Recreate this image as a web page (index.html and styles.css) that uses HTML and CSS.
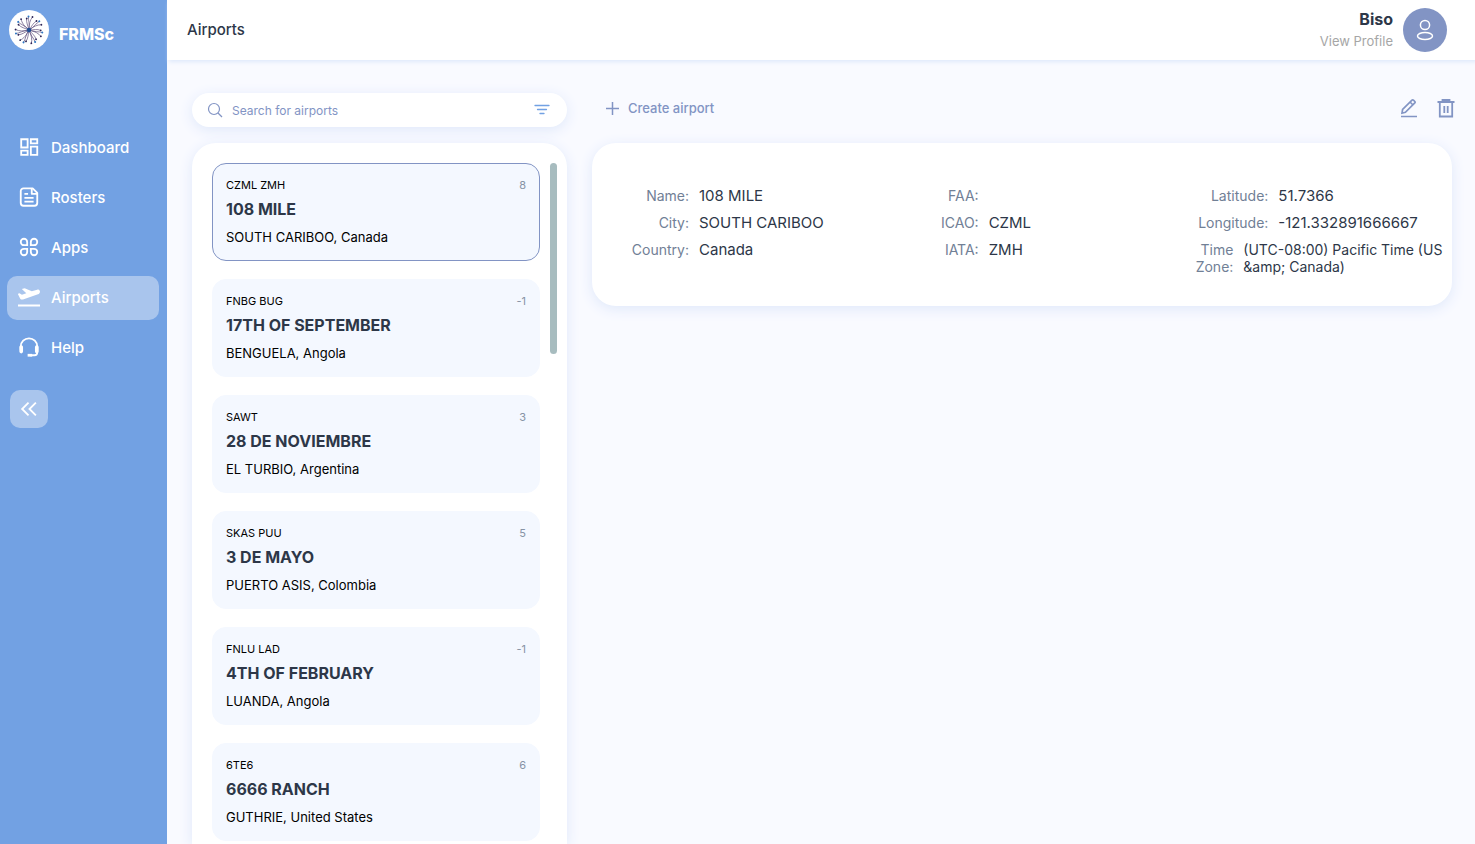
FILE: index.html
```html
<!DOCTYPE html>
<html lang="en">
  <head>
    <meta charset="UTF-8" />
    <meta name="viewport" content="width=device-width, initial-scale=1" />
    <title>FRMSc - Airports</title>
    <link rel="stylesheet" href="styles.css">
  </head>
  <body>
    <div class="app">
      <aside class="sidebar">
        <a class="brand" href="#">
          <svg class="logo" viewBox="0 0 40 40" aria-hidden="true">
            <defs>
              <g id="strands">
                <path d="M20 20C20 14 21 10 23.500 7M20 20C21 14 19 10 19.500 6.500M20 20C23 16 24 13 27.500 11" fill="none" stroke="#6a5c86" stroke-width=".7" />
                <circle cx="23.500" cy="7" r=".9" fill="#2b2354" />
                <circle cx="19.500" cy="6.500" r="1" fill="#2f78c4" />
                <circle cx="27.500" cy="11" r=".9" fill="#2b2354" />
              </g>
            </defs>
            <circle cx="20" cy="20" r="20" fill="#fff" />
            <use href="#strands" />
            <use href="#strands" transform="rotate(52 20 20)" />
            <use href="#strands" transform="rotate(103 20 20)" />
            <use href="#strands" transform="rotate(155 20 20)" />
            <use href="#strands" transform="rotate(206 20 20)" />
            <use href="#strands" transform="rotate(257 20 20)" />
            <use href="#strands" transform="rotate(309 20 20)" />
            <circle cx="20" cy="20" r="2.200" fill="#1f4f94" />
          </svg>
          <span class="brand-name">FRMSc</span>
        </a>
        <nav class="menu">
          <a class="menu-item" href="#">
            <svg class="icon" viewBox="0 0 24 24" fill="none" stroke="currentColor" stroke-width="2">
              <path d="M3.500 3.500h7v9h-7zM14 3.500h7v4.500h-7zM3.500 16h7v4.500h-7zM14 11.500h7v9h-7z" />
            </svg>
            Dashboard
          </a>
          <a class="menu-item" href="#">
            <svg class="icon" viewBox="0 0 24 24" fill="none" stroke="currentColor" stroke-width="2" stroke-linejoin="round">
              <path d="M6 2.500h10l5 5v11a3 3 0 0 1-3 3H6a3 3 0 0 1-3-3v-13a3 3 0 0 1 3-3z" />
              <path d="M15 3v5.500h6M7 8.500h4M7 13h10M7 17h10" />
            </svg>
            Rosters
          </a>
          <a class="menu-item" href="#">
            <svg class="icon" viewBox="0 0 24 24" fill="none" stroke="currentColor" stroke-width="2">
              <path d="M10 10H6.500A3.500 3.500 0 1 1 10 6.500zM14 10V6.500A3.500 3.500 0 1 1 17.500 10zM10 14v3.500A3.500 3.500 0 1 1 6.500 14zM14 14h3.500A3.500 3.500 0 1 1 14 17.500z" />
            </svg>
            Apps
          </a>
          <a class="menu-item active" href="#">
            <svg class="icon" viewBox="1 1 22 22" fill="currentColor">
              <path d="M1 19.500h22v2H1z" />
              <path d="M22.900 6.200c-.3-1.200-1.500-1.800-2.700-1.500L14.800 6.200 7.700 3.200 4.800 4.100l4.500 4.200-4.400 1.500L2.500 8.300.8 8.800l2.300 4.600c.6 1.100 1.700 1.400 2.900 1.100l15-5.200c1.400-.5 2.200-1.800 1.900-3.100z" />
            </svg>
            Airports
          </a>
          <a class="menu-item" href="#">
            <svg class="icon" viewBox="0 0 24 24" fill="none" stroke="currentColor" stroke-width="2">
              <path d="M3 15v-3.500a9 9 0 0 1 18 0V18a3 3 0 0 1-3 3h-5" />
              <path d="M3.500 12v5M20.500 12v5" stroke-width="4" stroke-linecap="round" />
              <path d="M10.500 21h5" stroke-width="3" />
            </svg>
            Help
          </a>
        </nav>
        <button class="collapse" type="button" aria-label="Collapse menu">
          <svg class="icon" viewBox="0 0 24 24" fill="none" stroke="currentColor" stroke-width="2">
            <path d="M11.500 5l-7 7 7 7M19.500 5l-7 7 7 7" />
          </svg>
        </button>
      </aside>

      <div class="page">
        <header class="topbar">
          <h1 class="page-title">Airports</h1>
          <a class="profile" href="#">
            <span class="profile-text">
              <strong class="profile-name">Biso</strong>
              <span class="profile-link">View Profile</span>
            </span>
            <span class="avatar">
              <svg class="icon-user" viewBox="0 0 24 24" fill="none" stroke="currentColor" stroke-width="1.500">
                <circle cx="12" cy="7" r="4.600" />
                <ellipse cx="12" cy="18" rx="7.500" ry="3.500" />
              </svg>
            </span>
          </a>
        </header>

        <main class="content">
          <section class="browser">
            <form class="search">
              <svg class="icon-search" viewBox="0 0 16 16" fill="none" stroke="currentColor" stroke-width="1.200">
                <circle cx="7" cy="7" r="5.500" />
                <path d="M11 11l4 4" />
              </svg>
              <input class="search-input" type="text" placeholder="Search for airports" aria-label="Search for airports">
              <button class="filter" type="button" aria-label="Filter">
                <svg class="icon-filter" viewBox="0 0 16 16" fill="none" stroke="currentColor" stroke-width="1.300" stroke-linecap="round">
                  <path d="M1 3.500h14M3.500 7.500h9M6 11.500h4" />
                </svg>
              </button>
            </form>

            <div class="list-panel">
              <ul class="airports">
                <li class="airport selected">
                  <div class="airport-top"><span>CZML ZMH</span><span class="offset">8</span></div>
                  <h2 class="airport-name">108 MILE</h2>
                  <p class="airport-city">SOUTH CARIBOO, Canada</p>
                </li>
                <li class="airport">
                  <div class="airport-top"><span>FNBG BUG</span><span class="offset">-1</span></div>
                  <h2 class="airport-name">17TH OF SEPTEMBER</h2>
                  <p class="airport-city">BENGUELA, Angola</p>
                </li>
                <li class="airport">
                  <div class="airport-top"><span>SAWT</span><span class="offset">3</span></div>
                  <h2 class="airport-name">28 DE NOVIEMBRE</h2>
                  <p class="airport-city">EL TURBIO, Argentina</p>
                </li>
                <li class="airport">
                  <div class="airport-top"><span>SKAS PUU</span><span class="offset">5</span></div>
                  <h2 class="airport-name">3 DE MAYO</h2>
                  <p class="airport-city">PUERTO ASIS, Colombia</p>
                </li>
                <li class="airport">
                  <div class="airport-top"><span>FNLU LAD</span><span class="offset">-1</span></div>
                  <h2 class="airport-name">4TH OF FEBRUARY</h2>
                  <p class="airport-city">LUANDA, Angola</p>
                </li>
                <li class="airport">
                  <div class="airport-top"><span>6TE6</span><span class="offset">6</span></div>
                  <h2 class="airport-name">6666 RANCH</h2>
                  <p class="airport-city">GUTHRIE, United States</p>
                </li>
              </ul>
              <div class="scroll-thumb"></div>
            </div>
          </section>

          <section class="details">
            <div class="toolbar">
              <button class="create" type="button">
                <svg class="icon-plus" viewBox="0 0 16 16" fill="none" stroke="currentColor" stroke-width="1.500">
                  <path d="M8.500 2v13M2 8.500h13" />
                </svg>
                Create airport
              </button>
              <div class="tools">
                <button class="tool" type="button" aria-label="Edit airport">
                  <svg class="icon-tool" viewBox="0 0 20 20" fill="none" stroke="currentColor" stroke-width="1.700">
                    <path d="M3 15.200l.6-3.700 9.400-9.400q.7-.7 1.400 0l1.400 1.400q.7.700 0 1.400l-9.400 9.400zM11 4l3 3M2 18.500h16" />
                  </svg>
                </button>
                <button class="tool" type="button" aria-label="Delete airport">
                  <svg class="icon-tool" viewBox="0 0 20 20" fill="none" stroke="currentColor" stroke-width="1.800">
                    <path d="M1.500 4h17M6.500 3.500V2h7v1.500M3.800 4v14.500h12.400V4M8.300 8v7M11.700 8v7" />
                  </svg>
                </button>
              </div>
            </div>

            <div class="detail-card">
              <dl class="detail-col">
                <div class="field"><dt>Name:</dt><dd>108 MILE</dd></div>
                <div class="field"><dt>City:</dt><dd>SOUTH CARIBOO</dd></div>
                <div class="field"><dt>Country:</dt><dd>Canada</dd></div>
              </dl>
              <dl class="detail-col">
                <div class="field"><dt>FAA:</dt><dd></dd></div>
                <div class="field"><dt>ICAO:</dt><dd>CZML</dd></div>
                <div class="field"><dt>IATA:</dt><dd>ZMH</dd></div>
              </dl>
              <dl class="detail-col">
                <div class="field"><dt>Latitude:</dt><dd>51.7366</dd></div>
                <div class="field"><dt>Longitude:</dt><dd>-121.332891666667</dd></div>
                <div class="field field-long"><dt>Time Zone:</dt><dd>(UTC-08:00) Pacific Time (US &amp;amp; Canada)</dd></div>
              </dl>
            </div>
          </section>
        </main>
      </div>
    </div>
  </body>
</html>
```
FILE: styles.css
```css
* {
  box-sizing: border-box;
}

body {
  margin: 0;
  font-family: Inter, "Liberation Sans", sans-serif;
  color: #2d3748;
  background-color: #f9faff;
}

h1, h2, p, ul, dl, dd {
  margin: 0;
  padding: 0;
}

a {
  color: inherit;
  text-decoration: none;
}

button {
  border: 0;
  padding: 0;
  background: none;
  font: inherit;
  color: #8294c4;
  cursor: pointer;
}

svg {
  display: block;
  flex-shrink: 0;
}

.app {
  display: flex;
  height: 100vh;
  overflow: hidden;
}

/* sidebar */
.sidebar {
  width: 167px;
  flex-shrink: 0;
  background-color: #72a1e3;
  color: #fff;
}

.brand {
  display: flex;
  align-items: center;
  gap: 10px;
  padding: 10px 9px;
}

.logo {
  width: 40px;
  height: 40px;
}

.brand-name {
  padding-top: 8px;
  font-size: 16px;
  font-weight: 800;
}

.menu {
  display: flex;
  flex-direction: column;
  gap: 6px;
  padding: 66px 8px 0 7px;
}

.menu-item {
  display: flex;
  align-items: center;
  gap: 11px;
  height: 44px;
  padding: 0 0 2px 11px;
  border-radius: 10px;
  font-size: 15px;
  font-weight: 500;
}

.menu-item.active,
.collapse {
  background-color: #a9c5ed;
}

.icon {
  width: 22px;
  height: 22px;
}

.collapse {
  display: flex;
  align-items: center;
  justify-content: center;
  width: 38px;
  height: 38px;
  margin: 20px 10px;
  border-radius: 10px;
  color: #fff;
}

/* top bar */
.page {
  display: flex;
  flex: 1;
  flex-direction: column;
  min-width: 0;
}

.topbar {
  display: flex;
  align-items: center;
  justify-content: space-between;
  height: 60px;
  flex-shrink: 0;
  padding: 0 28px 0 20px;
  background-color: #fff;
  box-shadow: 2px 2px 4px #dfe9fb;
}

.page-title {
  padding-bottom: 2px;
  font-size: 15px;
  font-weight: 500;
}

.profile {
  display: flex;
  align-items: center;
  gap: 10px;
}

.profile-text {
  display: flex;
  flex-direction: column;
  gap: 4px;
  padding-bottom: 2px;
  text-align: right;
}

.profile-name {
  font-size: 16px;
  line-height: 20px;
  font-weight: 700;
}

.profile-link {
  font-size: 13px;
  line-height: 16px;
  color: #a6a6a6;
}

.avatar {
  display: flex;
  align-items: center;
  justify-content: center;
  width: 44px;
  height: 44px;
  border-radius: 50%;
  background-color: #8294c4;
  color: #fff;
}

.icon-user {
  width: 24px;
  height: 24px;
}

/* content */
.content {
  display: flex;
  flex: 1;
  gap: 25px;
  min-height: 0;
  padding: 33px 23px 0 25px;
}

.browser {
  display: flex;
  flex-direction: column;
  gap: 16px;
  width: 375px;
  flex-shrink: 0;
}

.search,
.list-panel,
.detail-card {
  background-color: #fff;
  box-shadow: 0 3px 14px #dfe8fa;
}

.search {
  display: flex;
  align-items: center;
  gap: 9px;
  height: 34px;
  flex-shrink: 0;
  padding: 0 17px 0 15px;
  border-radius: 17px;
  color: #8294c4;
}

.icon-search,
.icon-filter,
.icon-plus {
  width: 16px;
  height: 16px;
}

.filter {
  color: #72a1e3;
}

.search-input {
  flex: 1;
  min-width: 0;
  padding: 0;
  border: 0;
  outline: 0;
  background: none;
  font: inherit;
  font-size: 12px;
}

.search-input::placeholder {
  color: #8294c4;
  opacity: 1;
}

.list-panel {
  display: flex;
  flex: 1;
  align-items: flex-start;
  gap: 10px;
  min-height: 0;
  padding: 20px 10px 0 20px;
  border-radius: 24px 24px 0 0;
}

.airports {
  display: flex;
  flex: 1;
  flex-direction: column;
  gap: 18px;
  list-style: none;
}

.airport {
  height: 98px;
  padding: 13px;
  border: 1px solid #f4f8ff;
  border-radius: 14px;
  background-color: #f4f8ff;
}

.airport.selected {
  border-color: #8294c4;
}

.airport-top {
  display: flex;
  justify-content: space-between;
  font-size: 11px;
  line-height: 16px;
  color: #000;
}

.offset {
  color: #8793a5;
}

.airport-name {
  margin: 6px 0;
  font-size: 16px;
  line-height: 20px;
  font-weight: 700;
}

.airport-city {
  font-size: 13px;
  line-height: 24px;
  color: #000;
}

.scroll-thumb {
  width: 7px;
  height: 191px;
  border-radius: 4px;
  background-color: #a7bcbf;
}

/* airport details */
.details {
  flex: 1;
  min-width: 0;
}

.toolbar {
  display: flex;
  align-items: center;
  justify-content: space-between;
  height: 30px;
  margin: 0 -4px 20px 12px;
}

.create {
  display: flex;
  align-items: center;
  gap: 8px;
  font-size: 13px;
  font-weight: 500;
}

.tools {
  display: flex;
  gap: 17px;
}

.icon-tool {
  width: 20px;
  height: 20px;
}

.detail-card {
  display: grid;
  grid-template-columns: repeat(3, 1fr);
  gap: 9px;
  padding: 44px 0 31px;
  border-radius: 24px;
  font-size: 15px;
  line-height: 17px;
}

.detail-col {
  display: flex;
  flex-direction: column;
  gap: 10px;
}

.field {
  display: flex;
  gap: 10px;
}

.field dt {
  width: 97px;
  flex-shrink: 0;
  font-size: 14px;
  text-align: right;
  color: #718096;
}

.field-long dt {
  width: 62px;
}

.field-long dd {
  font-size: 14px;
}
```
